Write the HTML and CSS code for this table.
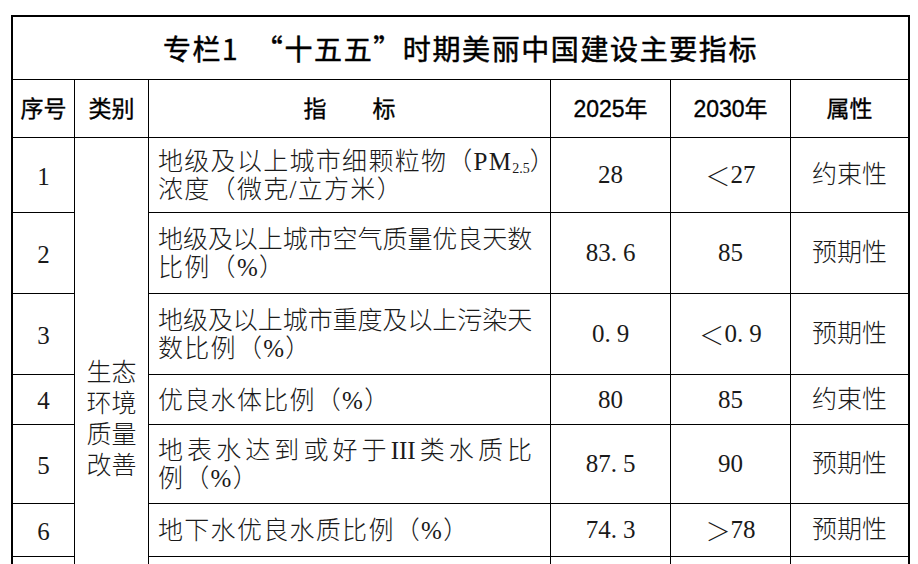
FILE: index.html
```html
<!DOCTYPE html>
<html lang="zh-CN">
<head>
<meta charset="utf-8">
<title>专栏1 “十五五”时期美丽中国建设主要指标</title>
<link rel="stylesheet" href="styles.css">
</head>
<body>
<div class="sheet">
  <div class="grid">
    <div class="c title">专栏1　“十五五”时期美丽中国建设主要指标</div>

    <div class="c hd">序号</div>
    <div class="c hd">类别</div>
    <div class="c hd">指　　标</div>
    <div class="c hd">2025年</div>
    <div class="c hd">2030年</div>
    <div class="c hd">属性</div>

    <div class="c cat">
      <div class="catText"><span class="l">生态</span><span class="l">环境</span><span class="l">质量</span><span class="l">改善</span></div>
    </div>

    <div class="c num">1</div>
    <div class="c ind"><div><span class="l">地级及以上城市细颗粒物（PM<span class="sub">2.5</span>）</span><span class="l">浓度（微克/立方米）</span></div></div>
    <div class="c v">28</div>
    <div class="c v"><span class="cjk">＜</span>27</div>
    <div class="c attr">约束性</div>

    <div class="c num">2</div>
    <div class="c ind"><div><span class="l j">地级及以上城市空气质量优良天数</span><span class="l">比例（%）</span></div></div>
    <div class="c v">83<span class="pt">.</span>6</div>
    <div class="c v">85</div>
    <div class="c attr">预期性</div>

    <div class="c num">3</div>
    <div class="c ind"><div><span class="l j">地级及以上城市重度及以上污染天</span><span class="l">数比例（%）</span></div></div>
    <div class="c v">0<span class="pt">.</span>9</div>
    <div class="c v"><span class="cjk">＜</span>0<span class="pt">.</span>9</div>
    <div class="c attr">预期性</div>

    <div class="c num">4</div>
    <div class="c ind"><div><span class="l">优良水体比例（%）</span></div></div>
    <div class="c v">80</div>
    <div class="c v">85</div>
    <div class="c attr">约束性</div>

    <div class="c num">5</div>
    <div class="c ind"><div><span class="l jw">地表水达到或好于III类水质比</span><span class="l">例（%）</span></div></div>
    <div class="c v">87<span class="pt">.</span>5</div>
    <div class="c v">90</div>
    <div class="c attr">预期性</div>

    <div class="c num">6</div>
    <div class="c ind"><div><span class="l">地下水优良水质比例（%）</span></div></div>
    <div class="c v">74<span class="pt">.</span>3</div>
    <div class="c v"><span class="cjk">＞</span>78</div>
    <div class="c attr">预期性</div>

    <div class="c num"></div>
    <div class="c ind"></div>
    <div class="c v"></div>
    <div class="c v"></div>
    <div class="c attr"></div>
  </div>
</div>
</body>
</html>
```

FILE: styles.css
```css
html, body {
  margin: 0;
  padding: 0;
  overflow: hidden;
  background: #fff;
}

body {
  font-family: "Liberation Serif", "Noto Sans CJK SC", serif;
  color: #1a1a1a;
}

.sheet {
  padding: 15px 8px 0 11px;
}

.grid {
  display: grid;
  width: max-content;
  grid-template-columns: 61px 73px 401px 119px 119px 117px;
  grid-template-rows: 62px 57px 74px 80px 80px 49px 78px 52px 80px;
  gap: 1px;
  background: #000;
  border: 2px solid #000;
}

.c {
  background: #fff;
  display: flex;
  align-items: center;
  justify-content: center;
  text-align: center;
  font-size: 25px;
  font-weight: 300;
  line-height: 28px;
}

.num {
  padding-top: 3px;
}

.title {
  grid-column: 1 / -1;
  font-family: "Noto Sans CJK SC", sans-serif;
  font-size: 28px;
  font-weight: 400;
  letter-spacing: 1.6px;
  color: #000;
  -webkit-text-stroke: 0.5px #000;
}

.hd {
  font-family: "Liberation Sans", "Noto Sans CJK SC", sans-serif;
  font-size: 23px;
  font-weight: 400;
  color: #000;
  -webkit-text-stroke: 0.35px #000;
}

.cat {
  grid-column: 2;
  grid-row: 3 / span 7;
  align-items: flex-start;
  padding-top: 219px;
}

.catText .l {
  display: block;
  line-height: 31px;
}

.ind {
  justify-content: flex-start;
  text-align: left;
  padding: 2px 18px 0 9px;
  letter-spacing: 1.3px;
}

.ind > div {
  width: 100%;
}

.ind .l {
  display: block;
  white-space: nowrap;
}

.ind .j {
  letter-spacing: -0.2px;
  text-align-last: justify;
  text-align: justify;
}

.ind .jw {
  text-align-last: justify;
  text-align: justify;
  letter-spacing: 0;
}

.sub {
  font-size: 14px;
  letter-spacing: 0;
  vertical-align: -3px;
  line-height: 0;
}

.pt {
  letter-spacing: 6px;
}

.cjk {
  font-family: "Noto Sans CJK SC", sans-serif;
}
```
